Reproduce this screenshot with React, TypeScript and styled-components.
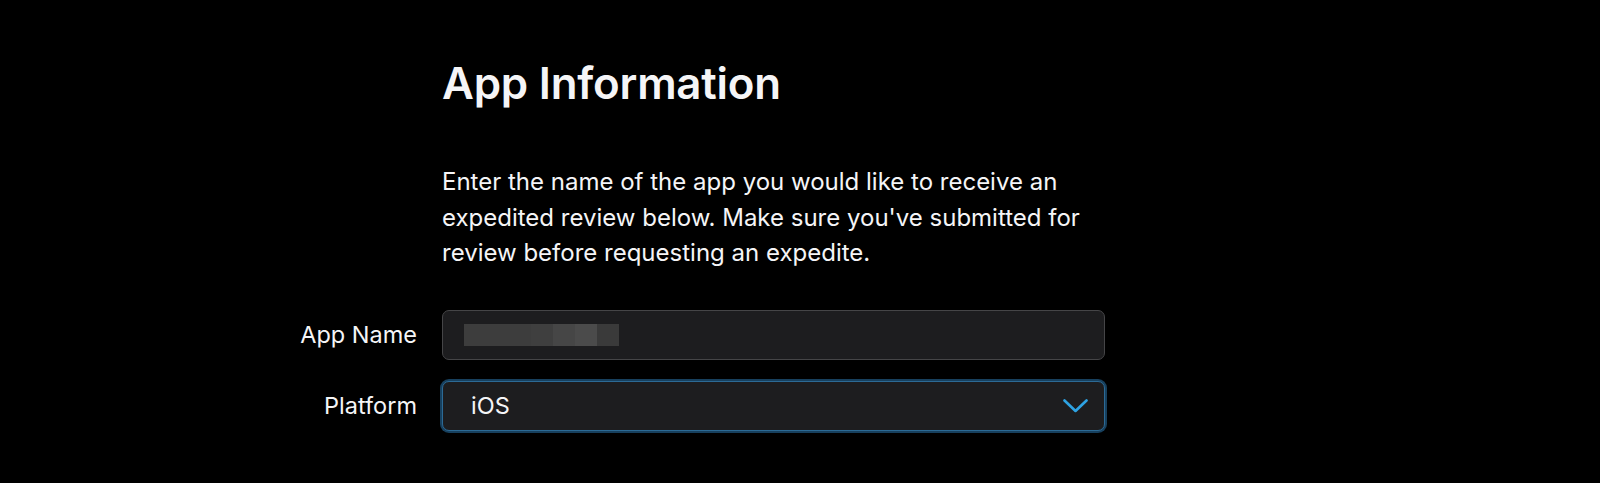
import React from "react";
import styled, { createGlobalStyle } from "styled-components";

const GlobalStyle = createGlobalStyle`
    html, body {
        margin: 0;
        padding: 0;
        background: #000;
    }
    body {
        font-family: Inter, "Noto Sans", "Liberation Sans", sans-serif;
        color: #f5f5f7;
        -webkit-font-smoothing: antialiased;
    }
`;

type FieldProps = {
    focused?: boolean
}

const Page = styled.main`
    display: grid;
    grid-template-columns: 442px 663px;
    row-gap: 21px;
    padding: 58px 0 49px 0;
    min-height: 483px;
    box-sizing: border-box;
    align-content: start;
`;

const Header = styled.header`
    grid-column: 2;
    display: flex;
    flex-direction: column;
    margin-bottom: 18px;
`;

const Title = styled.h1`
    margin: 0;
    font-size: 43.8px;
    line-height: 52px;
    font-weight: 600;
    letter-spacing: -0.2px;
    color: #f5f5f7;
`;

const Intro = styled.p`
    margin: 54px 0 0 0;
    max-width: 650px;
    font-size: 24px;
    line-height: 35.6px;
    font-weight: 400;
    letter-spacing: 0;
    color: #f5f5f7;
`;

const Label = styled.label`
    grid-column: 1;
    display: flex;
    align-items: center;
    justify-content: flex-end;
    padding-right: 25px;
    font-size: 23.5px;
    color: #f5f5f7;
`;

const Field = styled.div<FieldProps>`
    grid-column: 2;
    display: flex;
    align-items: center;
    justify-content: space-between;
    height: 50px;
    box-sizing: border-box;
    padding: 0 16px 0 ${props => props.focused ? "28px" : "21px"};
    background: #1d1d1f;
    border: 1px solid ${props => props.focused ? "#2c6a95" : "#454547"};
    border-radius: 7px;
    box-shadow: ${props => props.focused ? "0 0 0 2px #17405e" : "none"};
    font-size: 23.5px;
    color: #f5f5f7;
`;

const Redacted = styled.span`
    display: block;
    width: 155px;
    height: 22px;
    background: linear-gradient(
        to right,
        #3d3d3d 0 67px,
        #3f3f3f 67px 89px,
        #464646 89px 111px,
        #4b4b4b 111px 133px,
        #3a3a3a 133px 155px
    );
`;

const Chevron = () => (
    <svg width="25" height="14" viewBox="0 0 25 14" fill="none">
        <polyline points="1.5,1.5 12.5,12 23.5,1.5" stroke="#2ea3e3" strokeWidth="2.6" strokeLinecap="round" strokeLinejoin="round" />
    </svg>
);

export default function App() {
    return (
        <>
            <GlobalStyle />
            <Page>
                <Header>
                    <Title>App Information</Title>
                    <Intro>
                        Enter the name of the app you would like to receive an expedited review below. Make sure you've submitted for review before requesting an expedite.
                    </Intro>
                </Header>
                <Label>App Name</Label>
                <Field>
                    <Redacted />
                </Field>
                <Label>Platform</Label>
                <Field focused>
                    <span>iOS</span>
                    <Chevron />
                </Field>
            </Page>
        </>
    );
}
